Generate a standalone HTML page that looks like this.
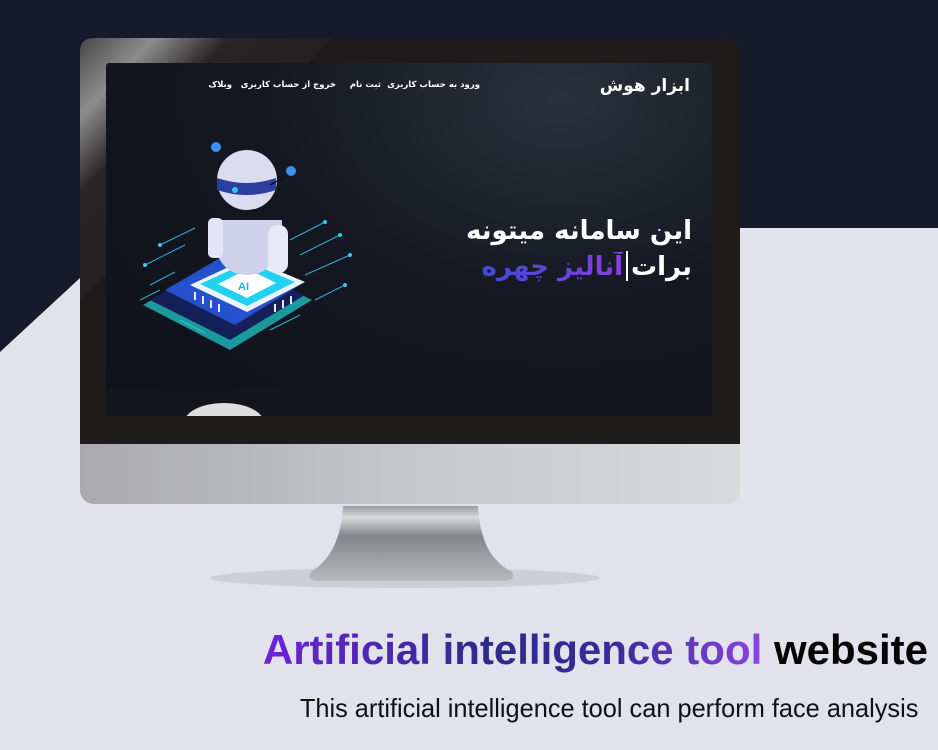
<!DOCTYPE html>
<html><head><meta charset="utf-8">
<style>
*{margin:0;padding:0;box-sizing:border-box}
body{width:938px;height:750px;overflow:hidden;background:#e2e2ec;position:relative;font-family:"Liberation Sans",sans-serif}
.abs{position:absolute}
.screen{left:106px;top:63px;width:606px;height:353px;background:radial-gradient(ellipse at 75% 10%,#2a303c 0%,#151822 45%,#0f111a 100%);overflow:hidden;border-radius:3px}
.nav{top:17px;font-family:"DejaVu Sans","Noto Sans CJK SC",sans-serif;font-size:8.5px;font-weight:bold;color:#fff;direction:rtl;white-space:nowrap}
.h1{direction:rtl;font-family:"DejaVu Sans","Noto Sans CJK SC",sans-serif;color:#fff;font-size:26px;line-height:36px;right:20px;top:150px;text-align:right;font-weight:bold;white-space:nowrap}
.grad{background:linear-gradient(90deg,#3d4ad6,#8a3de0);-webkit-background-clip:text;background-clip:text;color:transparent}
</style></head><body>
<svg class="abs" style="left:0;top:0" width="938" height="750">
<defs><linearGradient id="chin" x1="0" x2="1"><stop offset="0" stop-color="#a9a9ae"/><stop offset=".5" stop-color="#c6c8cc"/><stop offset="1" stop-color="#d8dadc"/></linearGradient>
<linearGradient id="bez" x1="0" y1="0" x2="1" y2="1"><stop offset="0" stop-color="#5a5a5c"/><stop offset=".15" stop-color="#bdbdbd"/><stop offset=".3" stop-color="#2a2828"/><stop offset="1" stop-color="#1e1b1b"/></linearGradient>
<linearGradient id="st" x1="0" y1="0" x2="0" y2="1"><stop offset="0" stop-color="#9c9da2"/><stop offset=".15" stop-color="#d8d9dc"/><stop offset=".4" stop-color="#85868b"/><stop offset="1" stop-color="#b8b9bd"/></linearGradient></defs>
<polygon points="0,0 938,0 938,228 740,228 740,250 80,278 0,352" fill="#161a2b"/>
<polygon points="738,228 938,228 938,318 930,318 930,240 738,240" fill="#e2e2ec"/>
<ellipse cx="405" cy="578" rx="195" ry="10" fill="#c9c9d4" opacity=".8"/>
<path d="M343,506 L478,506 C480,540 490,560 512,572 Q516,580 505,581 L318,581 Q306,580 311,572 C330,560 341,540 343,506Z" fill="url(#st)"/>
<rect x="80" y="443" width="660" height="61" rx="14" fill="url(#chin)"/>
<rect x="80" y="443" width="660" height="20" fill="url(#chin)"/>
<path d="M94,38 L726,38 Q740,38 740,52 L740,444 L80,444 L80,52 Q80,38 94,38Z" fill="#1e1b1b"/>
<path d="M94,38 L330,38 L240,140 L80,300 L80,52 Q80,38 94,38Z" fill="url(#bez)" opacity=".7"/>
</svg>
<div class="abs screen">
 <div class="abs" style="left:0;right:0;bottom:0;height:28px;background:#14141d"></div>
 <div class="abs" style="left:78px;top:340px;width:80px;height:40px;border-radius:50%;background:#ddd"></div>
 <div class="abs" style="right:22px;top:13px;color:#fff;font-size:17px;font-weight:bold;font-family:'DejaVu Sans','Noto Sans CJK SC',sans-serif;direction:rtl">ابزار هوش</div>
 <div class="abs nav" style="right:232px">ورود به حساب کاربری</div>
 <div class="abs nav" style="right:331px">ثبت نام</div>
 <div class="abs nav" style="right:376px">خروج از حساب کاربری</div>
 <div class="abs nav" style="right:480px">وبلاک</div>
 <div class="abs h1">این سامانه میتونه<br>برات<span style="display:inline-block;width:2px;height:30px;background:#fff;margin:0 3px;vertical-align:-6px"></span><span class="grad">آنالیز چهره</span></div>
 <svg class="abs" style="left:0;top:0" width="606" height="353">
 <g transform="translate(-106,-63)">
  <polygon points="143,305 230,350 312,300 225,258" fill="#1fc5c8" opacity=".75"/>
  <polygon points="150,300 230,340 305,295 225,258" fill="#13205a"/>
  <polygon points="165,290 235,325 300,285 230,252" fill="#2a5ee8" opacity=".8"/>
  <g stroke="#34c8f0" stroke-width="1" fill="none" opacity=".85">
   <path d="M145,265 L185,245 M150,285 L175,272 M300,255 L340,235 M305,275 L350,255 M160,245 L195,228 M290,240 L325,222 M315,300 L345,285 M140,300 L160,290 M180,320 L205,333 M270,330 L300,315"/>
  </g>
  <g fill="#34c8f0"><circle cx="145" cy="265" r="2"/><circle cx="340" cy="235" r="2"/><circle cx="350" cy="255" r="2"/><circle cx="160" cy="245" r="2"/><circle cx="325" cy="222" r="2"/><circle cx="345" cy="285" r="2"/></g>
  <polygon points="190,285 247,312 305,282 248,258" fill="#eef4ff"/>
  <polygon points="200,284 247,306 295,282 248,262" fill="#22d0f0"/>
  <polygon points="218,284 247,298 276,283 248,269" fill="#fff"/>
  <text x="238" y="290" font-size="11" font-weight="bold" fill="#2ab0f0" font-family="Liberation Sans">AI</text>
  <g stroke="#e8e8f8" stroke-width="2"><path d="M195,292 l0,8 M203,296 l0,8 M211,300 l0,8 M219,304 l0,8 M275,304 l0,8 M283,300 l0,8 M291,296 l0,8"/></g>
  <path d="M212,220 Q212,275 247,275 Q282,275 282,220 Z" fill="#cfd0ea"/>
  <rect x="208" y="218" width="15" height="40" rx="5" fill="#e4e4f4"/>
  <rect x="268" y="225" width="20" height="48" rx="9" fill="#e8e8f6"/>
  <ellipse cx="247" cy="180" rx="30" ry="30" fill="#dcdcf0"/>
  <path d="M217,178 Q247,188 276,178 L276,190 Q247,200 217,190Z" fill="#2a3fa0"/>
  <circle cx="235" cy="190" r="3" fill="#3ac0f0"/>
  <line x1="270" y1="185" x2="287" y2="176" stroke="#111" stroke-width="1.5"/>
  <circle cx="216" cy="147" r="5" fill="#3a8ff0"/>
  <circle cx="291" cy="171" r="5" fill="#3a8ff0"/>
 </g>
 </svg>
</div>
<div class="abs" style="right:10px;top:626px;font-size:42px;font-weight:bold;white-space:nowrap"><span style="background:linear-gradient(90deg,#6e22d8,#2e2a8a 45%,#3a2a9a 70%,#8a44e0);-webkit-background-clip:text;background-clip:text;color:transparent">Artificial intelligence tool</span> <span style="color:#050505">website</span></div>
<div class="abs" style="right:20px;top:693px;font-size:26px;color:#111;white-space:nowrap;transform:scaleX(0.975);transform-origin:right">This artificial intelligence tool can perform face analysis</div>
</body></html>
